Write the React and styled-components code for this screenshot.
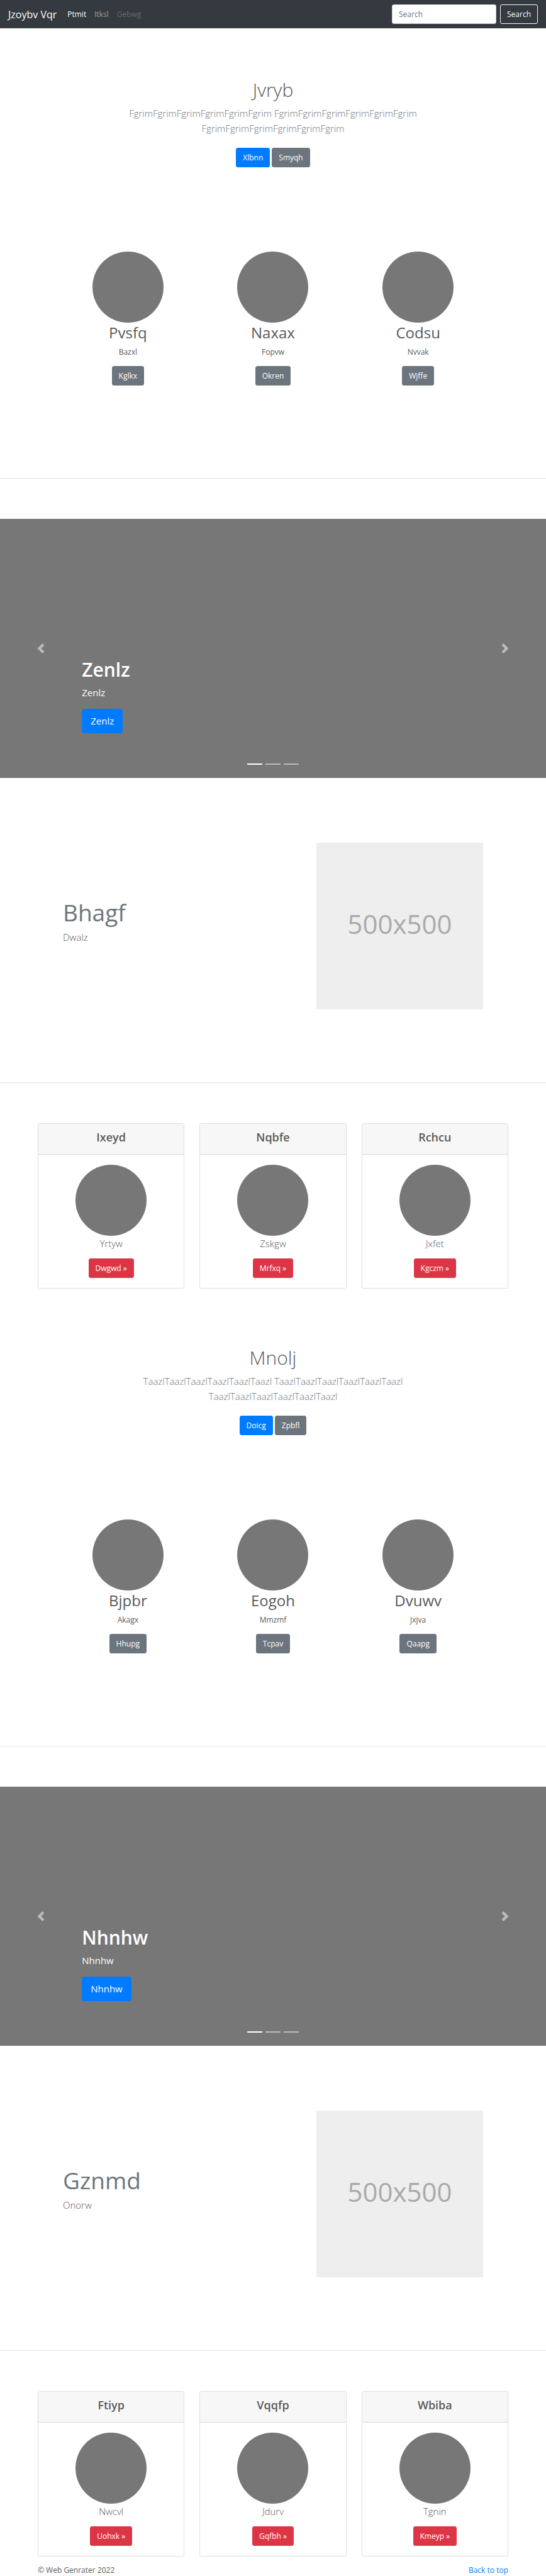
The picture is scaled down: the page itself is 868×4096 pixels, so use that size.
import React from "react";
import styled, { createGlobalStyle } from "styled-components";

const GlobalStyle = createGlobalStyle`
  *, *::before, *::after { box-sizing: border-box; }
  body {
    margin: 0;
    background: #fff;
    color: #5a5a5a;
    font-family: "Open Sans", "Noto Sans", sans-serif;
    font-size: 12px;
    line-height: 19px;
  }
  h1, h2, h3, h4, p { margin: 0; }
`;

const Navbar = styled.nav`
  display: flex;
  align-items: center;
  padding: 7px 13px;
  background: #343a40;
`;

const Brand = styled.a`
  margin-right: 17px;
  color: #fff;
  font-size: 16px;
  line-height: 24px;
  text-decoration: none;
`;

const NavLinks = styled.div`
  display: flex;
  flex: 1;
  gap: 13px;
`;

const NavLink = styled.a`
  color: rgba(255, 255, 255, ${(p) => p.$alpha});
  text-decoration: none;
`;

const SearchForm = styled.form`
  display: flex;
  gap: 6px;
`;

const SearchInput = styled.input`
  width: 166px;
  height: 31px;
  padding: 0 10px;
  border: 1px solid #ced4da;
  border-radius: 3px;
  background: #fff;
  font: inherit;
  &::placeholder { color: #6c757d; opacity: 1; }
`;

const tones = {
  primary: "#007bff",
  secondary: "#6c757d",
  danger: "#dc3545",
};

const Button = styled.button`
  height: ${(p) => (p.$large ? 39 : 31)}px;
  padding: 0 ${(p) => (p.$large ? 13 : 10)}px;
  border: 1px solid ${(p) => tones[p.$tone] || "#f8f9fa"};
  border-radius: ${(p) => (p.$large ? 4 : 3)}px;
  background: ${(p) => tones[p.$tone] || "transparent"};
  color: #fff;
  font: inherit;
  font-size: ${(p) => (p.$large ? 15 : 12)}px;
  white-space: nowrap;
`;

const Hero = styled.section`
  display: flex;
  flex-direction: column;
  align-items: center;
  padding: 79px 13px 134px;
  text-align: center;
`;

const HeroTitle = styled.h1`
  margin-bottom: 6px;
  font-size: 30px;
  line-height: 38px;
  font-weight: 300;
`;

const Lead = styled.p`
  font-size: 15px;
  line-height: 24px;
  font-weight: 300;
`;

const HeroLead = styled(Lead)`
  max-width: 500px;
  margin-bottom: 19px;
  color: #6c757d;
`;

const ButtonRow = styled.div`
  display: flex;
  gap: 3px;
`;

const Features = styled.section`
  display: grid;
  grid-template-columns: repeat(3, 1fr);
  max-width: 692px;
  margin: 0 auto;
  padding-bottom: 147px;
`;

const Feature = styled.div`
  display: flex;
  flex-direction: column;
  align-items: center;
`;

const Circle = styled.div`
  width: 113px;
  height: 113px;
  border-radius: 50%;
  background: #777;
`;

const FeatureTitle = styled.h2`
  margin-bottom: 5px;
  font-size: 24px;
  line-height: 32px;
  font-weight: 400;
`;

const FeatureText = styled.p`
  margin-bottom: 13px;
`;

const Divider = styled.hr`
  height: 1px;
  margin: 0 0 64px;
  border: 0;
  background: #e5e5e5;
`;

const Carousel = styled.section`
  position: relative;
  display: flex;
  flex-direction: column;
  justify-content: flex-end;
  height: 412px;
  padding: 0 15% 71px;
  background: #777;
  color: #fff;
`;

const SlideTitle = styled.h1`
  margin-bottom: 5px;
  font-size: 30px;
  line-height: 38px;
  font-weight: 600;
`;

const SlideText = styled.p`
  margin-bottom: 14px;
  font-size: 15px;
  line-height: 24px;
`;

const ArrowButton = styled.button`
  position: absolute;
  top: 0;
  bottom: 0;
  ${(p) => p.$side}: 0;
  display: flex;
  align-items: center;
  justify-content: center;
  width: 15%;
  padding: 0;
  border: 0;
  background: none;
  opacity: 0.5;
`;

const Indicators = styled.div`
  position: absolute;
  right: 0;
  bottom: 21px;
  left: 0;
  display: flex;
  justify-content: center;
  gap: 5px;
`;

const Indicator = styled.button`
  width: 24px;
  height: 2px;
  padding: 0;
  border: 0;
  background: #fff;
  opacity: ${(p) => (p.$active ? 1 : 0.5)};
`;

const Featurette = styled.section`
  display: flex;
  align-items: center;
  justify-content: space-between;
  max-width: 668px;
  margin: 0 auto;
  padding: 103px 0 116px;
`;

const FeaturetteText = styled.div`
  padding-bottom: 16px;
`;

const FeaturetteTitle = styled.h2`
  margin-bottom: 3px;
  color: #6c757d;
  font-size: 37px;
  line-height: 48px;
  font-weight: 400;
`;

const Placeholder = styled.div`
  display: flex;
  align-items: center;
  justify-content: center;
  width: 265px;
  height: 265px;
  padding-bottom: 8px;
  background: #eee;
  color: #aaa;
  font-size: 42px;
  line-height: 62px;
`;

const Cards = styled.section`
  display: grid;
  grid-template-columns: repeat(3, 1fr);
  gap: 24px;
  max-width: 748px;
  margin: 0 auto 12px;
`;

const Card = styled.article`
  border: 1px solid #dfdfdf;
  border-radius: 3px;
  background: #fff;
  text-align: center;
`;

const CardHeader = styled.header`
  padding: 10px 16px 15px;
  border-bottom: 1px solid #d8d8d8;
  background: #f7f7f7;
`;

const CardTitle = styled.h4`
  font-size: 18px;
  line-height: 23px;
  font-weight: 600;
`;

const CardBody = styled.div`
  display: flex;
  flex-direction: column;
  align-items: center;
  padding: 16px;
`;

const CardText = styled(Lead)`
  margin-bottom: 12px;
`;

const Footer = styled.footer`
  display: flex;
  justify-content: space-between;
  max-width: 748px;
  margin: 0 auto;
`;

const TopLink = styled.a`
  color: #007bff;
  text-decoration: none;
`;

const blocks = [
  {
    hero: {
      title: "Jvryb",
      text: "FgrimFgrimFgrimFgrimFgrimFgrim FgrimFgrimFgrimFgrimFgrimFgrim FgrimFgrimFgrimFgrimFgrimFgrim",
      primary: "Xlbnn",
      secondary: "Smyqh",
    },
    features: [
      ["Pvsfq", "Bazxl", "Kglkx"],
      ["Naxax", "Fopvw", "Okren"],
      ["Codsu", "Nvvak", "Wjffe"],
    ],
    slide: "Zenlz",
    featurette: ["Bhagf", "Dwalz"],
    cards: [
      ["Ixeyd", "Yrtyw", "Dwgwd »"],
      ["Nqbfe", "Zskgw", "Mrfxq »"],
      ["Rchcu", "Jxfet", "Kgczm »"],
    ],
  },
  {
    hero: {
      title: "Mnolj",
      text: "TaazlTaazlTaazlTaazlTaazlTaazl TaazlTaazlTaazlTaazlTaazlTaazl TaazlTaazlTaazlTaazlTaazlTaazl",
      primary: "Doicg",
      secondary: "Zpbfl",
    },
    features: [
      ["Bjpbr", "Akagx", "Hhupg"],
      ["Eogoh", "Mmzmf", "Tcpav"],
      ["Dvuwv", "Jxjva", "Qaapg"],
    ],
    slide: "Nhnhw",
    featurette: ["Gznmd", "Onorw"],
    cards: [
      ["Ftiyp", "Nwcvl", "Uohxk »"],
      ["Vqqfp", "Jdurv", "Gqfbh »"],
      ["Wbiba", "Tgnin", "Kmeyp »"],
    ],
  },
];

const Chevron = ({ d }) => (
  <svg width="16" height="16" viewBox="0 0 8 8" fill="#fff" aria-hidden="true">
    <path d={d} />
  </svg>
);

const Block = ({ hero, features, slide, featurette, cards }) => (
  <>
    <Hero>
      <HeroTitle>{hero.title}</HeroTitle>
      <HeroLead>{hero.text}</HeroLead>
      <ButtonRow>
        <Button $tone="primary">{hero.primary}</Button>
        <Button $tone="secondary">{hero.secondary}</Button>
      </ButtonRow>
    </Hero>
    <Features>
      {features.map(([title, text, action]) => (
        <Feature key={title}>
          <Circle />
          <FeatureTitle>{title}</FeatureTitle>
          <FeatureText>{text}</FeatureText>
          <Button $tone="secondary">{action}</Button>
        </Feature>
      ))}
    </Features>
    <Divider />
    <Carousel>
      <SlideTitle>{slide}</SlideTitle>
      <SlideText>{slide}</SlideText>
      <div>
        <Button $tone="primary" $large>{slide}</Button>
      </div>
      <ArrowButton $side="left" aria-label="Previous">
        <Chevron d="M5.25 0l-4 4 4 4 1.5-1.5L4.25 4l2.5-2.5L5.25 0z" />
      </ArrowButton>
      <ArrowButton $side="right" aria-label="Next">
        <Chevron d="M2.75 0l-1.5 1.5L3.75 4l-2.5 2.5L2.75 8l4-4-4-4z" />
      </ArrowButton>
      <Indicators>
        <Indicator $active aria-label="Slide 1" />
        <Indicator aria-label="Slide 2" />
        <Indicator aria-label="Slide 3" />
      </Indicators>
    </Carousel>
    <Featurette>
      <FeaturetteText>
        <FeaturetteTitle>{featurette[0]}</FeaturetteTitle>
        <Lead>{featurette[1]}</Lead>
      </FeaturetteText>
      <Placeholder>500x500</Placeholder>
    </Featurette>
    <Divider />
    <Cards>
      {cards.map(([title, text, action]) => (
        <Card key={title}>
          <CardHeader>
            <CardTitle>{title}</CardTitle>
          </CardHeader>
          <CardBody>
            <Circle />
            <CardText>{text}</CardText>
            <Button $tone="danger">{action}</Button>
          </CardBody>
        </Card>
      ))}
    </Cards>
  </>
);

export default function App() {
  return (
    <>
      <GlobalStyle />
      <Navbar id="top">
        <Brand href="#top">Jzoybv Vqr</Brand>
        <NavLinks>
          <NavLink href="#ptmit" $alpha={1}>Ptmit</NavLink>
          <NavLink href="#itksl" $alpha={0.5}>Itksl</NavLink>
          <NavLink href="#gebwg" $alpha={0.25} aria-disabled="true">Gebwg</NavLink>
        </NavLinks>
        <SearchForm onSubmit={(e) => e.preventDefault()}>
          <SearchInput type="search" placeholder="Search" aria-label="Search" />
          <Button type="submit">Search</Button>
        </SearchForm>
      </Navbar>
      <main>
        {blocks.map((block) => (
          <Block key={block.slide} {...block} />
        ))}
      </main>
      <Footer>
        <p>© Web Genrater 2022</p>
        <TopLink href="#top">Back to top</TopLink>
      </Footer>
    </>
  );
}
